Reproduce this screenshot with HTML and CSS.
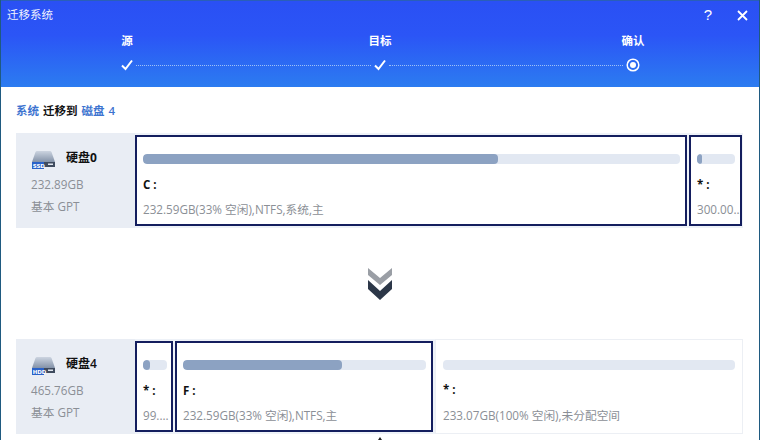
FILE: index.html
```html
<!DOCTYPE html>
<html lang="zh-CN">
<head>
<meta charset="utf-8">
<title>迁移系统</title>
<link rel="stylesheet" href="styles.css">
</head>
<body>
<div class="window">
  <header class="head">
    <div class="titlebar">
      <span class="title">迁移系统</span>
      <span class="help">?</span>
      <svg class="close" viewBox="0 0 11 11" width="11" height="11"><path d="M1 1L10 10M10 1L1 10" stroke="#fff" stroke-width="1.8" fill="none"/></svg>
    </div>
    <div class="labels">
      <span class="label">源</span><span class="label">目标</span><span class="label">确认</span>
    </div>
    <div class="steps">
      <svg class="check" viewBox="0 0 12 12" width="12" height="12"><path d="M1 6.5L4.5 10L11 1.5" stroke="#fff" stroke-width="2" fill="none"/></svg>
      <span class="dots"></span>
      <svg class="check" viewBox="0 0 12 12" width="12" height="12"><path d="M1 6.5L4.5 10L11 1.5" stroke="#fff" stroke-width="2" fill="none"/></svg>
      <span class="dots"></span>
      <svg class="radio" viewBox="0 0 14 14" width="14" height="14"><circle cx="7" cy="7" r="5.8" stroke="#fff" stroke-width="1.5" fill="none"/><circle cx="7" cy="7" r="3" fill="#fff"/></svg>
    </div>
  </header>
  <main class="body">
    <p class="summary"><span class="blue">系统</span> 迁移到 <span class="blue">磁盘 4</span></p>
    <section class="disk">
      <div class="info">
        <div class="name">
          <svg class="drive" viewBox="0 0 24 19" width="24" height="19"><defs><linearGradient id="dg" x1="0" y1="0" x2="0" y2="1"><stop offset="0" stop-color="#ccd4e0"/><stop offset="1" stop-color="#8392a8"/></linearGradient></defs><path d="M6 1H19Q20 1 20.500 2L24 12H1L4.500 2Q5 1 6 1Z" fill="url(#dg)"/><rect x="13" y="12" width="11" height="5" fill="#3f4b5e"/><rect x="17" y="13.500" width="5" height="1.500" fill="#dfe5ee"/><rect x="1" y="12" width="12" height="7" fill="#2a62c8"/><text class="tag" x="1.700" y="17.800">SSD</text></svg>
          <b>硬盘0</b>
        </div>
        <div class="meta">232.89GB</div>
        <div class="meta">基本 GPT</div>
      </div>
      <div class="parts">
        <div class="part sel grow">
          <div class="bar"><i class="fill w66"></i></div>
          <div class="letter">C :</div>
          <div class="desc">232.59GB(33% 空闲),NTFS,系统,主</div>
        </div>
        <div class="part sel p53">
          <div class="bar"><i class="fill w12"></i></div>
          <div class="letter">* :</div>
          <div class="desc">300.00...</div>
        </div>
      </div>
    </section>
    <div class="arrow">
      <svg viewBox="0 0 26 34" width="26" height="34"><path d="M1 1L13 11L25 1V8L13 18L1 8Z" fill="#9a9ea5"/><path d="M1 13L13 24L25 13V22L13 33L1 22Z" fill="#2c3748"/></svg>
    </div>
    <section class="disk">
      <div class="info">
        <div class="name">
          <svg class="drive" viewBox="0 0 24 19" width="24" height="19"><path d="M6 1H19Q20 1 20.500 2L24 12H1L4.500 2Q5 1 6 1Z" fill="url(#dg)"/><rect x="13" y="12" width="11" height="5" fill="#3f4b5e"/><rect x="17" y="13.500" width="5" height="1.500" fill="#dfe5ee"/><rect x="1" y="12" width="12" height="7" fill="#2a62c8"/><text class="tag" x="1.700" y="17.800">HDD</text></svg>
          <b class="thin">硬盘4</b>
        </div>
        <div class="meta">465.76GB</div>
        <div class="meta">基本 GPT</div>
      </div>
      <div class="parts">
        <div class="part sel p38">
          <div class="bar"><i class="fill w33"></i></div>
          <div class="letter">* :</div>
          <div class="desc">99....</div>
        </div>
        <div class="part sel p259">
          <div class="bar"><i class="fill w66b"></i></div>
          <div class="letter">F :</div>
          <div class="desc">232.59GB(33% 空闲),NTFS,主</div>
        </div>
        <div class="part free grow">
          <div class="bar"></div>
          <div class="letter">* :</div>
          <div class="desc">233.07GB(100% 空闲),未分配空间</div>
        </div>
      </div>
    </section>
  </main>
  <span class="tip"></span>
</div>
</body>
</html>
```
FILE: styles.css
```css
* { box-sizing: border-box; }
html, body { margin: 0; padding: 0; }
body {
  width: 760px; height: 440px; overflow: hidden; background: #fff;
  font-family: "Open Sans", "Noto Sans CJK SC", sans-serif;
}
.window {
  position: relative; width: 760px; height: 440px; overflow: hidden;
  border-left: 1px solid #1f5a80; border-right: 1px solid #1f5a80;
}
.head {
  height: 87px;
  background: linear-gradient(180deg, #2a50f4 0%, #2b55f6 40%, #2c7cf0 100%);
  border-top: 1px solid #2a5fb8;
  color: #fff;
}
.titlebar { display: flex; align-items: center; height: 29px; padding: 0 11px 0 6px; }
.title { font-size: 11.5px; opacity: .92; flex: 1; margin-top: -3px; }
.help { font: 15px "Liberation Sans", sans-serif; margin-right: 25px; margin-top: -3px; }
.close { display: block; margin-top: -1px; }
.labels {
  display: flex; justify-content: space-between; height: 28px;
  padding: 2px 120px 0 120px; font-size: 11.5px; font-weight: 700; line-height: 18px;
}
.label { width: 12px; display: flex; justify-content: center; white-space: nowrap; }
.steps { display: flex; align-items: center; height: 14px; padding: 0 119px 0 120px; }
.check, .radio { display: block; flex: none; }
.dots { flex: 1; margin: 0 3px; border-top: 1px dotted #9fc0f8; }
.body { padding: 0 16px 0 15px; }
.summary { margin: 0; height: 46px; padding-top: 15px; font-size: 11.5px; font-weight: 600; line-height: 18px; color: #111; word-spacing: 1px; }
.blue { color: #3d74d0; }
.disk { display: flex; height: 95px; background: #eef2f8; }
.info { width: 119px; flex: none; background: #e9edf4; padding: 14px 0 0 15px; }
.name { display: flex; align-items: center; height: 20px; font-size: 12px; color: #111; }
.drive { margin: 5px 11px 0 0; flex: none; }
.tag { font: 700 5.500px "DejaVu Sans", sans-serif; fill: #fff; }
.name b { font-weight: 700; }
.name .thin { font-weight: 600; }
.meta { font-size: 11.7px; line-height: 23px; color: #8b8f96; }
.meta:nth-child(2) { margin-top: 7px; line-height: 21px; }
.parts { flex: 1; display: flex; gap: 2px; padding: 2px 1px 2px 0; }
.part { height: 91px; background: #fff; padding: 17px 5px 0 6px; overflow: hidden; }
.sel { border: 2px solid #141e5e; }
.free { border: 1px solid #eceff4; padding: 20px 7px 0 7px; height: 95px; margin-top: -2px; margin-right: -1px; }
.grow { flex: 1; min-width: 0; }
.p53 { width: 53px; flex: none; padding-right: 0; }
.p38 { width: 38px; flex: none; padding-right: 4px; }
.p259 { width: 258px; flex: none; }
.bar { height: 10px; border-radius: 4px; background: #e2e8f2; overflow: hidden; }
.p53 .bar { margin-right: 5px; }
.fill { display: block; height: 10px; border-radius: 4px; background: #8ca2c2; }
.w66 { width: 66.1%; }
.w66b { width: 65.6%; }
.w33 { width: 30%; }
.w12 { width: 13%; }
.letter { margin-top: 12px; height: 18px; font-size: 11.5px; line-height: 18px; font-weight: 700; color: #111; white-space: nowrap; }
.desc { margin-top: 6px; font-size: 11.7px; line-height: 18px; color: #8b8f96; white-space: nowrap; }
.free .letter { margin-top: 11px; }
.free .desc { margin-top: 7px; }
.arrow { display: flex; justify-content: center; height: 111px; padding-top: 39px; }
.tip {
  position: absolute; left: 377px; top: 437px; width: 0; height: 0;
  border-left: 2px solid transparent; border-right: 2px solid transparent; border-bottom: 3px solid #222;
}
```
